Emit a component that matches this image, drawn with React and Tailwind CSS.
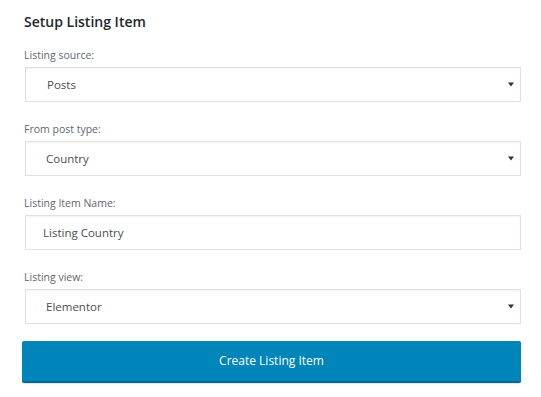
export default function App() {
  const fields = [
    { label: 'Listing source:', value: 'Posts', select: true, pad: 'pl-[21px]' },
    { label: 'From post type:', value: 'Country', select: true, pad: 'pl-[20px]' },
    { label: 'Listing Item Name:', value: 'Listing Country', select: false, pad: 'pl-[17px]' },
    { label: 'Listing view:', value: 'Elementor', select: true, pad: 'pl-[20px]' },
  ];

  return (
    <div
      className="w-[541px] h-[397px] bg-white pl-[24px] pr-[20px] pt-[12px]"
      style={{ fontFamily: '"Open Sans", "Noto Sans", sans-serif' }}
    >
      <h2 className="text-[14px] leading-[20px] font-semibold text-[#23282d]">Setup Listing Item</h2>

      <div className="mt-[16px] flex flex-col gap-[20px]">
        {fields.map((f) => (
          <div key={f.label}>
            <label className="block text-[10.5px] leading-[14px] text-[#5f6770]">{f.label}</label>
            <div
              className={`mt-[5px] ml-[1px] h-[35px] flex items-center justify-between border border-[#e0e0e0] shadow-[inset_0_1px_2px_rgba(0,0,0,0.05)] ${f.pad} pr-[5px]`}
            >
              <span className="text-[11.5px] text-[#4d4d4d]">{f.value}</span>
              {f.select && (
                <svg width="6" height="5" viewBox="0 0 6 5" className="mr-[1px]">
                  <path d="M0 0.5 L6 0.5 L3 4.5 Z" fill="#333" />
                </svg>
              )}
            </div>
          </div>
        ))}
      </div>

      <button className="mt-[17px] ml-[-2px] w-[499px] h-[42px] rounded-[2px] bg-[#0085ba] border-b-[2px] border-[#006799] text-white text-[12px] shadow-[0_1px_1px_rgba(0,0,0,0.1)]">
        Create Listing Item
      </button>
    </div>
  );
}
